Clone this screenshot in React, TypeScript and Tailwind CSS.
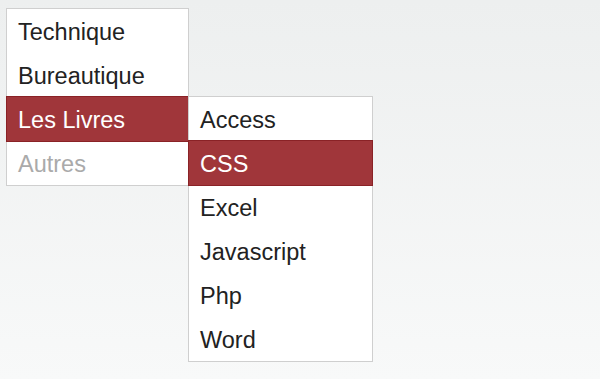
import React from "react";

const main = ["Technique", "Bureautique", "Les Livres", "Autres"];
const sub = ["Access", "CSS", "Excel", "Javascript", "Php", "Word"];

export default function App() {
  return (
    <div
      className="w-[600px] h-[379px] bg-gradient-to-b from-[#edefef] to-[#f8f9f9] pt-[8px] pl-[6px]"
      style={{ fontFamily: '"Liberation Sans", Arial, sans-serif' }}
    >
      <ul className="relative w-[183px] border border-[#cfcfcf] bg-white">
        {main.map((m) => {
          const active = m === "Les Livres";
          return (
            <li key={m} className="relative">
              <div
                className={
                  active
                    ? "relative z-10 h-[44px] flex items-center pt-[4px] pl-[11px] text-[23.5px] text-white bg-[#a0363a] shadow-[0_0_0_1px_#8a2226]"
                    : m === "Autres"
                    ? "h-[44px] flex items-center pt-[4px] pl-[11px] text-[23.5px] text-[#aaaaaa]"
                    : "h-[44px] flex items-center pt-[4px] pl-[11px] text-[23.5px] text-[#222222]"
                }
              >
                {m}
              </div>
              {active && (
                <ul className="absolute left-[181px] top-[-1px] w-[185px] border border-[#cfcfcf] bg-white z-20">
                  {sub.map((s) => (
                    <li key={s}>
                      <div
                        className={
                          s === "CSS"
                            ? "relative h-[44px] flex items-center pt-[4px] pl-[11px] text-[23.5px] text-white bg-[#a0363a] shadow-[0_0_0_1px_#8a2226]"
                            : "h-[44px] flex items-center pt-[4px] pl-[11px] text-[23.5px] text-[#222222]"
                        }
                      >
                        {s}
                      </div>
                    </li>
                  ))}
                </ul>
              )}
            </li>
          );
        })}
      </ul>
    </div>
  );
}
